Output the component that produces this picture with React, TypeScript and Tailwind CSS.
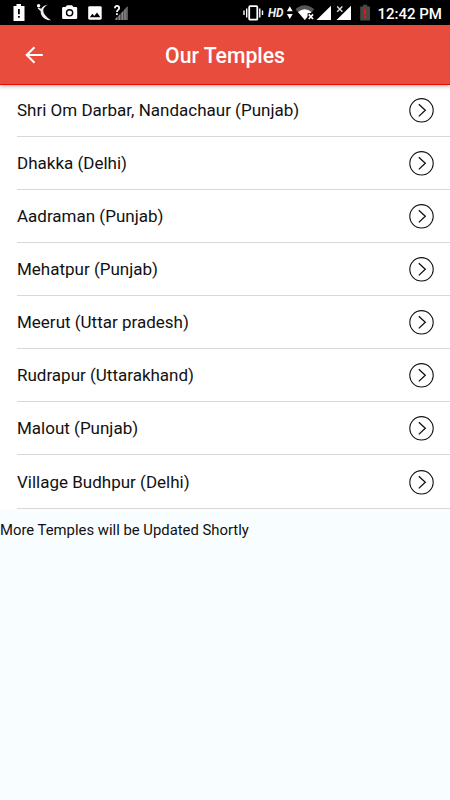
import React from "react";

const temples = [
  "Shri Om Darbar, Nandachaur (Punjab)",
  "Dhakka (Delhi)",
  "Aadraman (Punjab)",
  "Mehatpur (Punjab)",
  "Meerut (Uttar pradesh)",
  "Rudrapur (Uttarakhand)",
  "Malout (Punjab)",
  "Village Budhpur (Delhi)",
];

function StatusBar() {
  return (
    <div className="flex h-[25px] shrink-0 items-start bg-black text-white">
      <svg className="ml-[13px] h-[25px] w-[12px]" viewBox="0 0 12 25">
        <path fill="#fff" d="M3.5 4h4.5v2h3.5v15H.5V6h3z" />
        <path fill="#000" d="M5 9h1.8v5.3H5zM5 16h1.8v1.8H5z" />
      </svg>
      <svg className="ml-[11px] h-[25px] w-[16px]" viewBox="36 0 16 25">
        <circle cx="38.6" cy="5.8" r="1.7" fill="#fff" />
        <path fill="#eee" d="M47.8 4.8Q44 6.500 43.200 10Q43 15 51 20.200Q46 20.800 42.500 16.800Q40.300 14 40.600 11L37.600 8.600L38.800 7.700L41.200 8.800Q43.200 5.200 47.800 4.800z" />
      </svg>
      <svg className="ml-[10px] h-[25px] w-[16px]" viewBox="62 0 16 25">
        <path fill="#fff" d="M67 5.3h5l1.5 1.7H76a1.2 1.2 0 0 1 1.2 1.2v9.6A1.2 1.2 0 0 1 76 19H63.3a1.2 1.2 0 0 1-1.2-1.2V8.2a1.2 1.2 0 0 1 1.2-1.2h2.2z" />
        <circle cx="69.6" cy="12.8" r="3.1" fill="#fff" stroke="#000" strokeWidth="1.4" />
      </svg>
      <svg className="ml-[10px] h-[25px] w-[14px]" viewBox="88 0 14 25">
        <rect x="88.2" y="6.2" width="13.5" height="13.5" rx="1.4" fill="#fff" />
        <path fill="#000" d="M89.8 17.2l2.6-3.4 1.9 2.2 2.7-3.6 3.4 4.8z" />
      </svg>
      <svg className="ml-[11px] h-[25px] w-[16px]" viewBox="113 0 16 25">
        <path fill="#444" d="M127.500 6.500V20H114.500z" />
        <path fill="#888" d="M115.500 18.500l1.700-1.700V20h-1.700zM118.500 15.800l1.700-1.700V20h-1.700zM121.500 12.800l1.700-1.700V20h-1.700zM124.200 9.700l1.500-1.500V20h-1.500zM126.500 7.300l1-1V20h-1z" />
        <path d="M114.900 8.200c0-3.200 4.500-3 4.200 0-.1 1.700-2.200 1.700-2.200 3.900M116.900 13.300v1.700" fill="none" stroke="#fff" strokeWidth="1.8" />
      </svg>

      <svg className="ml-auto h-[25px] w-[22px]" viewBox="242 0 22 25">
        <rect x="249.2" y="6.2" width="8.1" height="13.5" rx="1" fill="none" stroke="#fff" strokeWidth="1.8" />
        <path d="M244 10.500v4.500M246.700 8.500v9M259.800 8.500v9M262.500 10.500v4.500" stroke="#fff" strokeWidth="1.4" />
      </svg>
      <svg className="ml-[4px] h-[25px] w-[17px] text-[12.5px] font-bold italic" viewBox="0 0 17 25">
        <text x="0" y="17.3" textLength="15.5" lengthAdjust="spacingAndGlyphs" fill="#eee">HD</text>
      </svg>
      <svg className="ml-[1px] h-[25px] w-[7px]" viewBox="286 0 7 25">
        <path fill="#fff" d="M289.800 6.300l2.900 4.900h-5.800zM286.900 14h5.800l-2.900 4.900z" />
      </svg>
      <svg className="ml-[2px] h-[25px] w-[20px]" viewBox="295 0 20 25">
        <path fill="#555" d="M295.500 9.200Q304.700 1.200 314.200 9.200L304.800 20z" />
        <path fill="#fff" d="M298 12.100Q304.800 6.400 311.500 12.100L304.800 20z" />
        <path d="M307.600 13.200h7v7.800h-7z" fill="#000" />
        <path d="M308.700 14.400l4.300 4.600M313 14.400l-4.300 4.600" stroke="#fff" strokeWidth="1.7" />
      </svg>
      <svg className="ml-[1px] h-[25px] w-[16px]" viewBox="316 0 16 25">
        <path fill="#fff" d="M331 5.700V20h-14.500z" />
      </svg>
      <svg className="ml-[4px] h-[25px] w-[16px]" viewBox="336 0 16 25">
        <path fill="#fff" d="M351 5.700V20h-14.500z" />
        <path fill="#000" d="M336 5h8v7.500h-8z" />
        <path d="M337.200 6.400l5.200 5.400M342.400 6.400l-5.200 5.400" stroke="#ddd" strokeWidth="1.4" />
      </svg>
      <svg className="ml-[8px] h-[25px] w-[11px]" viewBox="360 0 11 25">
        <path fill="#484848" d="M363 4.800h4.300v1.700h2.700v14h-9.800v-14h2.800z" />
        <path fill="#f5100c" d="M364 8.800h2v5.700h-2zM364 16h2v2h-2z" />
      </svg>
      <span className="ml-[6.5px] w-[72.5px] text-[15px] font-medium leading-[28px] whitespace-nowrap">12:42 PM</span>
    </div>
  );
}

function TempleRow({ name }: { name: string }) {
  return (
    <li className="ml-[17px] flex h-[53.12px] items-center justify-between border-b border-[#d8d8d8] pr-4">
      <span className="text-[17px] leading-6 whitespace-nowrap">{name}</span>
      <svg className="mt-[1px] h-[25px] w-[25px]" viewBox="0 0 25 25" fill="none" stroke="#111">
        <circle cx="12.5" cy="12.3" r="11.7" strokeWidth="1.1" />
        <path d="M9.800 6.200l6.500 6.100-6.500 6.100" strokeWidth="1.3" />
      </svg>
    </li>
  );
}

export default function App() {
  return (
    <div className="flex h-[800px] w-[450px] flex-col overflow-hidden bg-[#f8fdff] font-[Roboto,sans-serif] text-[#111]">
      <StatusBar />
      <header className="z-10 grid h-[60px] shrink-0 grid-cols-[70px_1fr_70px] items-center border-b border-[#e90b04] bg-[#e74c3c] text-white shadow-[0_1px_4px_rgba(0,0,0,0.35)]">
        <svg className="ml-[25px] mt-[1px] h-[18px] w-[18px]" viewBox="0 0 18 18" fill="none" stroke="#fff" strokeWidth="2">
          <path d="M9.500 1.200L1.700 9l7.800 7.800M2 9h15.800" />
        </svg>
        <h1 className="mt-[2px] text-center text-[21.2px] font-medium leading-7">Our Temples</h1>
      </header>
      <ul className="-mt-[1.3px] bg-white">
        {temples.map((name) => (
          <TempleRow key={name} name={name} />
        ))}
      </ul>
      <p className="mt-[11.5px] text-[14.85px] leading-5">More Temples will be Updated Shortly</p>
    </div>
  );
}
